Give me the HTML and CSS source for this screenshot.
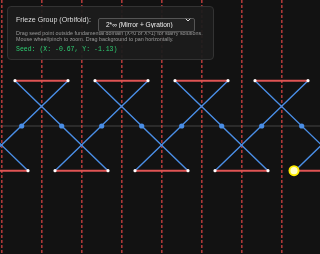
FILE: index.html
```html
<!DOCTYPE html>
<html lang="en">
<head>
    <meta charset="UTF-8" />
    <meta name="viewport" content="width=device-width, initial-scale=1.0" />
    <title>Frieze Patterns</title>
    <link rel="stylesheet" href="styles.css">
</head>
<body>

    <canvas id="view" width="320" height="254"></canvas>

    <div class="panel">
        <div class="panel-row">
            <label for="group">Frieze Group (Orbifold):</label>
            <div class="select-wrap">
                <select id="group">
                    <option value="2*inf">2*∞ (Mirror + Gyration)</option>
                    <option value="inf-inf">∞∞ (Translation)</option>
                    <option value="22inf">22∞ (Half-turns)</option>
                    <option value="*inf-inf">*∞∞ (Mirrors)</option>
                    <option value="*22inf">*22∞ (Mirrors + Half-turns)</option>
                </select>
                <svg class="chevron" width="6" height="4" viewBox="0 0 6 4">
                    <path d="M0.8 0.8 L3 3 L5.2 0.8" fill="none" stroke="#ddd" stroke-width="1" />
                </svg>
            </div>
        </div>
        <p class="help">
            Drag seed point outside fundamental domain (X&lt;0 or X&gt;1) for starry solutions.<br>
            Mouse wheel/pinch to zoom. Drag background to pan horizontally.
        </p>
        <div class="seed" id="seed">Seed: (X: -0.67, Y: -1.13)</div>
    </div>

    <script>
        const canvas = document.getElementById('view');
        const ctx = canvas.getContext('2d');

        const axisY = 126;
        const topY = 80.7;
        const botY = 170.7;

        function draw() {
            ctx.fillStyle = '#121212';
            ctx.fillRect(0, 0, canvas.width, canvas.height);

            // axis
            ctx.strokeStyle = '#2b2b2b';
            ctx.lineWidth = 2;
            ctx.beginPath();
            ctx.moveTo(0, axisY);
            ctx.lineTo(canvas.width, axisY);
            ctx.stroke();

            // mirror lines
            ctx.strokeStyle = 'rgba(200, 64, 64, 0.85)';
            ctx.lineWidth = 1.6;
            ctx.setLineDash([3, 2]);
            for (let x = 1.8; x < canvas.width; x += 40) {
                ctx.beginPath();
                ctx.moveTo(x, 0);
                ctx.lineTo(x, canvas.height);
                ctx.stroke();
            }
            ctx.setLineDash([]);

            // blue edges
            ctx.strokeStyle = '#4a8ee6';
            ctx.lineWidth = 1.4;
            for (let k = -1; k < 5; k++) {
                const o = k * 80;
                ctx.beginPath();
                ctx.moveTo(15 + o, topY);
                ctx.lineTo(108 + o, botY);
                ctx.moveTo(68 + o, topY);
                ctx.lineTo(-25 + o, botY);
                ctx.stroke();
            }

            // red edges
            ctx.strokeStyle = '#e05454';
            ctx.lineWidth = 2;
            for (let k = -1; k < 5; k++) {
                const o = k * 80;
                ctx.beginPath();
                ctx.moveTo(15 + o, topY);
                ctx.lineTo(68 + o, topY);
                ctx.moveTo(-25 + o, botY);
                ctx.lineTo(28 + o, botY);
                ctx.stroke();
            }

            // gyration points
            ctx.fillStyle = '#4a8ee6';
            for (let x = 21.7; x < canvas.width + 5; x += 40) {
                ctx.beginPath();
                ctx.arc(x, axisY, 2.6, 0, Math.PI * 2);
                ctx.fill();
            }

            // vertices
            ctx.fillStyle = '#ffffff';
            for (let k = -1; k < 5; k++) {
                const o = k * 80;
                [[15 + o, topY], [68 + o, topY], [-25 + o, botY], [28 + o, botY]].forEach(p => {
                    ctx.beginPath();
                    ctx.arc(p[0], p[1], 1.6, 0, Math.PI * 2);
                    ctx.fill();
                });
            }

            // seed
            ctx.fillStyle = '#ffee00';
            ctx.beginPath();
            ctx.arc(294, botY, 5.5, 0, Math.PI * 2);
            ctx.fill();
            ctx.fillStyle = '#ffffc8';
            ctx.beginPath();
            ctx.arc(294, botY, 3.6, 0, Math.PI * 2);
            ctx.fill();
        }

        draw();
    </script>

</body>
</html>
```

FILE: styles.css
```css
body {
    margin: 0;
    background-color: #121212;
    font-family: "Liberation Sans", Arial, sans-serif;
    overflow: hidden;
}

canvas {
    display: block;
}

.panel {
    position: absolute;
    top: 6px;
    left: 7px;
    width: 189px;
    padding: 6px 8px 5px 8px;
    background: rgba(28, 28, 28, 0.95);
    border: 1px solid #333;
    border-radius: 4px;
    color: #ddd;
}

.panel-row {
    display: flex;
    align-items: center;
    gap: 7px;
}

    .panel-row label {
        font-size: 7.1px;
        color: #ddd;
    }

.select-wrap {
    position: relative;
    width: 97px;
    height: 14px;
}

    .select-wrap select {
        appearance: none;
        -webkit-appearance: none;
        width: 100%;
        height: 100%;
        padding: 0 0 0 7px;
        background: #222;
        color: #eee;
        border: 1px solid #555;
        border-radius: 2px;
        font-family: "Liberation Sans", Arial, sans-serif;
        font-size: 6.6px;
        box-sizing: border-box;
    }

    .select-wrap .chevron {
        position: absolute;
        right: 4px;
        top: 5px;
        pointer-events: none;
    }

.help {
    margin: 3px 0 0 0;
    font-size: 5.4px;
    line-height: 6.4px;
    color: #999;
}

.seed {
    margin-top: 3px;
    font-family: "Liberation Mono", "Courier New", monospace;
    font-size: 6.5px;
    line-height: 8px;
    color: #2ecc71;
}
```
